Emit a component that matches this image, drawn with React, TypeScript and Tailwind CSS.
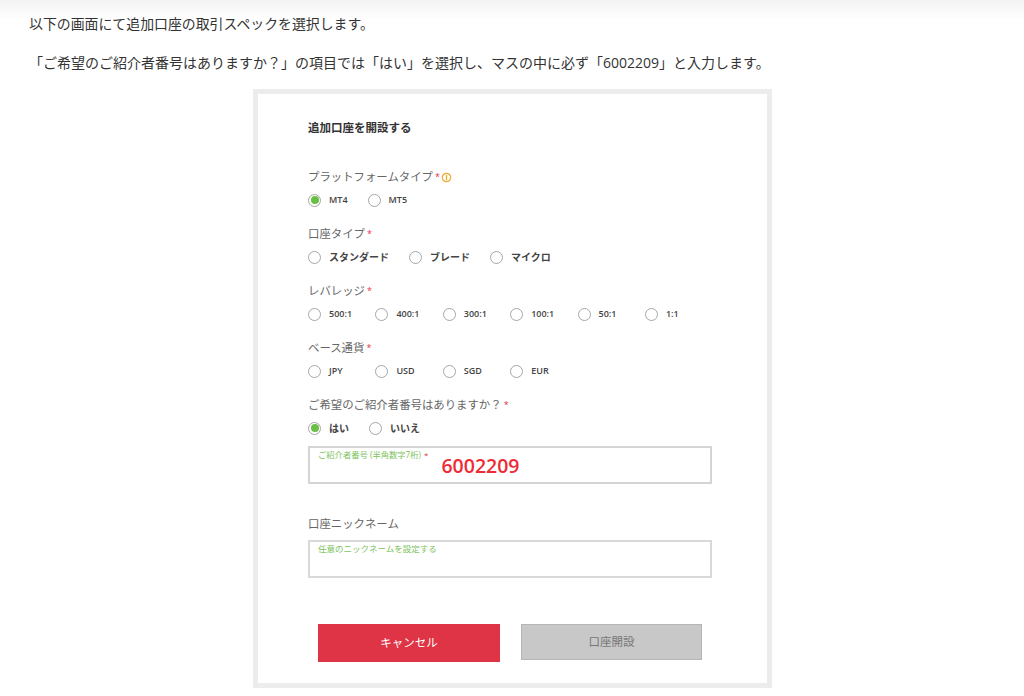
const jp = '"Open Sans", "Noto Sans CJK JP", sans-serif';

function Radio({ label, checked, bold, fixed }: { label: string; checked?: boolean; bold?: boolean; fixed?: boolean }) {
  return (
    <div className={`flex items-center gap-[8px] ${fixed ? 'w-[67.4px]' : ''}`}>
      <span className="w-[13px] h-[13px] rounded-full border-[1.5px] border-[#a6a6a6] bg-white flex items-center justify-center">
        {checked && <span className="w-[8px] h-[8px] rounded-full bg-[#6abf45]"></span>}
      </span>
      <span className={`text-[#444] leading-[14px] ${bold ? 'text-[10px] font-bold' : 'text-[9px] font-semibold'}`}>{label}</span>
    </div>
  );
}

function Group({ label, info, options, checked, bold, fixed }: { label: string; info?: boolean; options: string[]; checked?: string; bold?: boolean; fixed?: boolean }) {
  return (
    <div className="h-[57px]">
      <div className="flex items-center h-[16px] text-[11.4px] text-[#666]">
        {label}
        <span className="text-[#e5343f] ml-[2px] text-[9px]">*</span>
        {info && (
          <svg className="ml-[1px]" width="11" height="11" viewBox="0 0 11 11">
            <circle cx="5.5" cy="5.5" r="4.2" fill="none" stroke="#f0a92e" strokeWidth="1.2" />
            <line x1="5.5" y1="2.8" x2="5.5" y2="8.2" stroke="#f0a92e" strokeWidth="1.3" />
          </svg>
        )}
      </div>
      <div className={`flex items-center mt-[8px] h-[14px] ${fixed ? '' : 'gap-[20px]'}`}>
        {options.map((o) => (
          <Radio key={o} label={o} checked={o === checked} bold={bold} fixed={fixed} />
        ))}
      </div>
    </div>
  );
}

export default function App() {
  return (
    <div className="w-[1024px] h-[696px] overflow-hidden bg-white bg-[linear-gradient(to_bottom,#f3f3f3,#ffffff_20px)]" style={{ fontFamily: jp }}>
      <p className="pt-[14px] pl-[29px] text-[13.9px] leading-[20px] text-[#333]">以下の画面にて追加口座の取引スペックを選択します。</p>
      <p className="mt-[19px] pl-[29px] text-[14px] leading-[20px] text-[#333]">「ご希望のご紹介者番号はありますか？」の項目では「はい」を選択し、マスの中に必ず「6002209」と入力します。</p>

      <div className="ml-[253px] mt-[16px] w-[519px] h-[599px] border-[5px] border-[#ececec] bg-white pl-[50px] pt-[26px]">
        <h2 className="text-[11.5px] leading-[16px] font-bold text-[#333]">追加口座を開設する</h2>
        <div className="mt-[33px]">
          <Group label="プラットフォームタイプ" info options={['MT4', 'MT5']} checked="MT4" />
          <Group label="口座タイプ" options={['スタンダード', 'ブレード', 'マイクロ']} bold />
          <Group label="レバレッジ" options={['500:1', '400:1', '300:1', '100:1', '50:1', '1:1']} fixed />
          <Group label="ベース通貨" options={['JPY', 'USD', 'SGD', 'EUR']} fixed />
          <Group label="ご希望のご紹介者番号はありますか？" options={['はい', 'いいえ']} checked="はい" bold />
        </div>

        <div className="-mt-[8px] w-[404px] h-[38px] border-2 border-[#d4d4d4] pl-[8px] flex items-start">
          <span className="text-[8.3px] leading-[10px] mt-[2px] text-[#7cc35c]">ご紹介者番号 (半角数字7桁)</span>
          <span className="text-[8px] leading-[10px] mt-[2px] ml-[3px] text-[#e5343f]">*</span>
          <span className="ml-[13px] mt-[5px] text-[19.5px] leading-[26px] font-semibold text-[#ee2b36]">6002209</span>
        </div>

        <div className="mt-[32px] h-[16px] flex items-center text-[11.4px] text-[#666]">口座ニックネーム</div>
        <div className="mt-[8px] w-[404px] h-[38px] border-2 border-[#d9d9d9] pl-[8px]">
          <span className="block text-[8.5px] leading-[10px] mt-[2px] text-[#7cc35c]">任意のニックネームを設定する</span>
        </div>

        <div className="mt-[46px] ml-[10px] flex items-start gap-[21px]">
          <button className="w-[182px] h-[38px] bg-[#de3446] text-white text-[11.5px]">キャンセル</button>
          <button className="w-[181px] h-[36px] bg-[#c8c8c8] border border-[#b5b5b5] text-[#777] text-[11.5px]">口座開設</button>
        </div>
      </div>
    </div>
  );
}
